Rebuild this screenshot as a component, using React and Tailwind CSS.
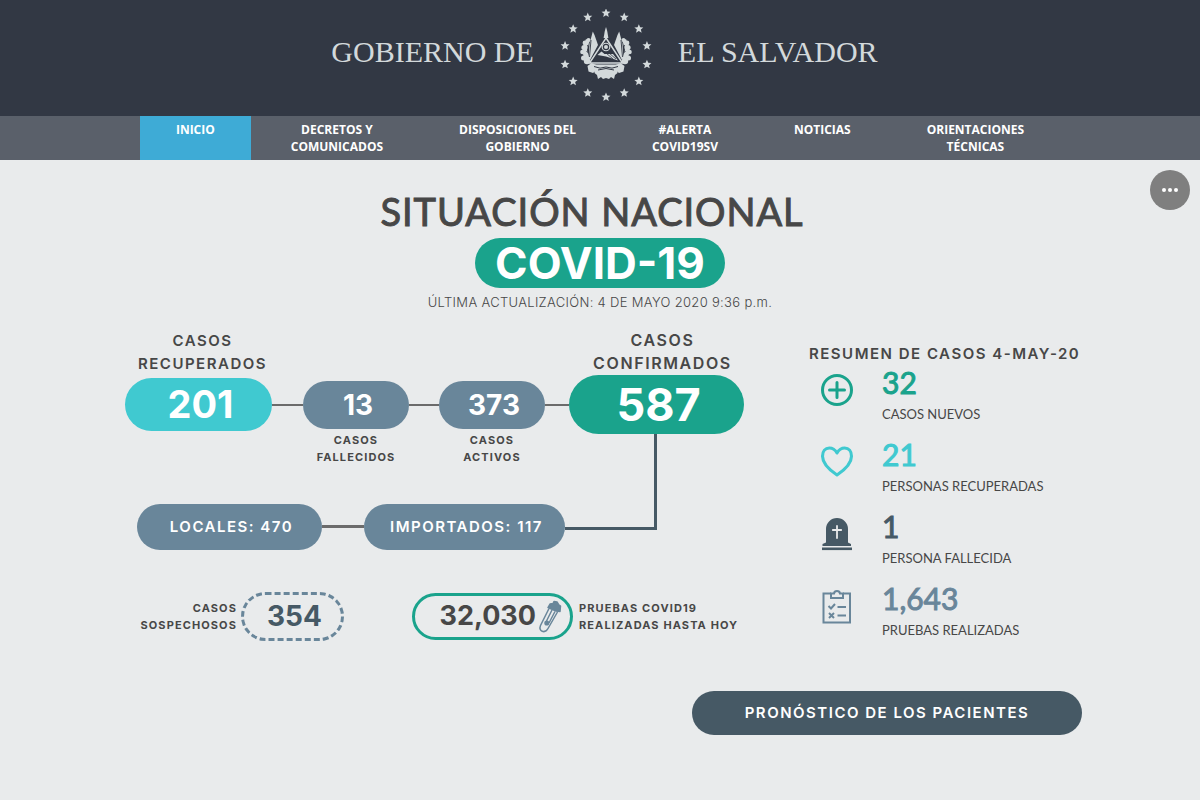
import React from "react";

const NAV = [
  { lines: ["INICIO"], active: true },
  { lines: ["DECRETOS Y", "COMUNICADOS"] },
  { lines: ["DISPOSICIONES DEL", "GOBIERNO"] },
  { lines: ["#ALERTA", "COVID19SV"] },
  { lines: ["NOTICIAS"] },
  { lines: ["ORIENTACIONES", "TÉCNICAS"] },
];

const STAR = "0,-4.6 1.3,-1.5 4.5,-1.3 2,0.8 2.8,4 0,2.3 -2.8,4 -2,0.8 -4.5,-1.3 -1.3,-1.5";

function Emblem() {
  const stars = Array.from({ length: 14 }, (_, i) => {
    const a = (i * 2 * Math.PI) / 14;
    return [46 + 42 * Math.sin(a), 46 - 42 * Math.cos(a)];
  });
  const side = (
    <g>
      <path d="M32 25.500l.8-3 1.700 3.500 3.500 10-8 15-1.500-2 1-14z" />
      <circle cx="28.500" cy="31" r="2" />
      <circle cx="25" cy="34" r="2.400" />
      <circle cx="24" cy="38.500" r="2.600" />
      <circle cx="22.500" cy="43" r="2.300" />
      <circle cx="25.500" cy="45.500" r="2.400" />
      <circle cx="23.500" cy="49" r="2.500" />
      <circle cx="27" cy="52" r="3.200" />
      <path d="M26 30q-4 8-1.500 17l3 6 2-3-2.500-9 2.500-9z" />
      <path d="M27.500 57l4-3 5 2 .5 5-4 3-4.500-1.500z" />
      <path d="M35 60l5-1 6 2v8l-3 1-2-2-3 2-1-4-2.500-2z" />
      <path d="M31 31l-1.500 17M27.500 36l1 3M26.500 42l2 2" stroke="#323844" strokeWidth=".9" fill="none" />
    </g>
  );
  return (
    <svg viewBox="0 0 92 92" className="h-[92px] w-[92px] fill-[#d3d9db]" role="img" aria-label="Escudo de El Salvador">
      {stars.map(([x, y], i) => (
        <polygon key={i} points={STAR} transform={`translate(${x} ${y})`} />
      ))}
      {side}
      <g transform="translate(92 0) scale(-1 1)">{side}</g>
      <path d="M46 18l1.200 4 1.200 7h-4.800l1.200-7z" />
      <path d="M46 29L62.500 54h-33z" fill="#323844" stroke="#d3d9db" strokeWidth="1.500" />
      <circle cx="46" cy="38" r="3.800" fill="none" stroke="#d3d9db" strokeWidth="1.100" />
      <circle cx="46" cy="38" r="2" />
      <path d="M37.500 46l4-3.500 3 2.500h8.500l5 6.500-12-4z" />
      <path d="M46 44l7 6M49 44l7 6" stroke="#323844" strokeWidth=".8" />
      <path d="M31 55.500h30l-5 6q-10 4-20 0z" />
      <path d="M34 57.500q6 3 12 .5 6 2.500 12-.5M38 61q8-3 16 0" stroke="#323844" strokeWidth="1" fill="none" />
    </svg>
  );
}

function PlusIcon() {
  return (
    <svg viewBox="0 0 34 34" className="h-[34px] w-[34px]" fill="none" stroke="#1aa38c" strokeWidth="3" strokeLinecap="round" aria-hidden="true">
      <circle cx="17" cy="17" r="14.500" />
      <path d="M17 9.500v15M9.500 17h15" />
    </svg>
  );
}

function HeartIcon() {
  return (
    <svg viewBox="0 0 34 34" className="h-[34px] w-[34px]" fill="none" stroke="#40c9d0" strokeWidth="3.200" strokeLinejoin="round" aria-hidden="true">
      <path d="M17.500 8.500C15.500 5.200 12.600 3.600 9.500 3.600 5.200 3.600 2.400 7.200 2.400 11.800c0 7.600 8 14.200 15.100 18.800 7.100-4.600 15.100-11.200 15.100-18.800 0-4.600-2.800-8.200-7.100-8.200-3.100 0-6 1.600-8 4.900z" transform="translate(.2 -.6) scale(.96 1)" />
    </svg>
  );
}

function TombIcon() {
  return (
    <svg viewBox="0 0 34 34" className="h-[34px] w-[34px]" fill="#465965" aria-hidden="true">
      <path d="M6 25.500V12a11 11 0 0 1 22 0v13.500l3 1.500v2H2.500v-2z" />
      <path d="M2 30.500h30v2.600H2z" />
      <path d="M17 9v12M12.800 13h8.400" stroke="#e9ebec" strokeWidth="1.800" fill="none" strokeLinecap="round" />
    </svg>
  );
}

function ClipboardIcon() {
  return (
    <svg viewBox="0 0 34 36" className="h-[36px] w-[34px]" fill="none" stroke="#69869a" strokeWidth="2" aria-hidden="true">
      <path d="M11 4.500H3.500v29h26.500v-29H23" />
      <path d="M11 4.500h3c.5-3.200 5.500-3.200 6 0h3v4.500H11z" />
      <path d="M8.500 17l2.500 2.500 4-4.500M17.500 18h8.500M17.500 26.500h8.500M9 24l5 5M14 24l-5 5" />
    </svg>
  );
}

function TubeIcon() {
  return (
    <svg viewBox="0 0 24 34" className="h-[34px] w-[24px] shrink-0" fill="none" stroke="#69869a" strokeWidth="1.500" strokeLinejoin="round" aria-hidden="true">
      <path d="M11 8.500L2.500 25.500C0 31.500 7 34 10 28.500L19.500 12" />
      <path d="M10 7.500l2-3.500 3-.5 1-2 3 .5 1.500 2.500 2 1.500-.5 5.500-4-.5z" fill="#69869a" />
      <path d="M14 10L8.500 21M17 11.500L11 23" />
      <circle cx="8.800" cy="23" r="1.800" fill="#69869a" />
    </svg>
  );
}

const SUMMARY = [
  { value: "32", label: "CASOS NUEVOS", color: "text-[#1aa38c]", Icon: PlusIcon },
  { value: "21", label: "PERSONAS RECUPERADAS", color: "text-[#40c9d0]", Icon: HeartIcon },
  { value: "1", label: "PERSONA FALLECIDA", color: "text-[#465965]", Icon: TombIcon },
  { value: "1,643", label: "PRUEBAS REALIZADAS", color: "text-[#69869a]", Icon: ClipboardIcon },
];

const SMALL = "text-[11px] leading-[17px] font-bold tracking-widest";

function Line() {
  return <div className="h-[2px] bg-[#6b6b6b]" />;
}

export default function App() {
  return (
    <div className="relative min-h-screen bg-[#e9ebec] font-['Inter',sans-serif] text-[#474747]">
      <header className="flex h-[116px] items-center justify-center gap-[26px] bg-[#323844] pb-[6px] pl-[9px] font-['Liberation_Serif',serif] text-[30px] leading-[36px] text-[#d3d9db]">
        <span className="pb-[6px]">GOBIERNO DE</span>
        <Emblem />
        <span className="pb-[6px]">EL SALVADOR</span>
      </header>

      <nav className="bg-[#5a606a] font-['Open_Sans',sans-serif] text-[12px] leading-[17px] font-bold text-white">
        <ul className="mx-auto flex h-[44px] w-fit gap-1">
          {NAV.map(({ lines, active }) => (
            <li key={lines[0]}>
              <a href="#" className={`block h-full px-9 pt-[5px] text-center whitespace-nowrap ${active ? "bg-[#3eabd6]" : ""}`}>
                {lines.map((l) => (
                  <span key={l} className="block">{l}</span>
                ))}
              </a>
            </li>
          ))}
        </ul>
      </nav>

      <button type="button" aria-label="Más opciones" className="absolute top-[170px] right-[10px] flex h-10 w-10 items-center justify-center gap-[2px] rounded-full bg-[#7f7f7f]">
        <span className="h-1 w-1 rounded-full bg-white" />
        <span className="h-1 w-1 rounded-full bg-white" />
        <span className="h-1 w-1 rounded-full bg-white" />
      </button>

      <main className="mx-auto max-w-[964px] pt-[28px]">
        <div className="flex flex-col items-center">
          <h1 className="flex flex-col items-center">
            <span className="pr-4 font-['Lato',sans-serif] text-[38px] leading-[46px] font-normal tracking-wide [-webkit-text-stroke:1px]">SITUACIÓN NACIONAL</span>
            <span className="mt-1 h-[50px] rounded-[25px] bg-[#1aa38c] px-5 text-[44px] leading-[50px] font-bold text-white">COVID-19</span>
          </h1>
          <p className="text-[13px] leading-[28px] font-light tracking-wide">ÚLTIMA ACTUALIZACIÓN: 4 DE MAYO 2020 9:36 p.m.</p>
        </div>

        <div className="flex justify-between pt-[13px]">
          <section className="pl-[7px]" aria-label="Casos a nivel nacional">
            <div className="grid grid-cols-[147px_31px_106px_30px_106px_24px_175px] items-center">
              <h2 className="pl-2 text-center text-[15px] leading-[23px] font-semibold tracking-widest whitespace-nowrap">CASOS<br />RECUPERADOS</h2>
              <h2 className="col-start-7 pl-3 text-center text-[16px] leading-[23px] font-semibold tracking-widest whitespace-nowrap">CASOS<br />CONFIRMADOS</h2>

              <div className="col-start-1 h-[53px] rounded-full bg-[#40c9d0] pl-1 text-center text-[38px] leading-[53px] font-bold text-white">201</div>
              <Line />
              <div className="h-[48px] rounded-full bg-[#69869a] pl-1 text-center text-[28px] leading-[48px] font-bold text-white">13</div>
              <Line />
              <div className="h-[48px] rounded-full bg-[#69869a] pl-1 text-center text-[28px] leading-[48px] font-bold text-white">373</div>
              <Line />
              <div className="h-[59px] rounded-full bg-[#1aa38c] pl-1 text-center text-[45px] leading-[59px] font-bold text-white">587</div>

              <p className={`col-start-3 -mt-[2px] text-center ${SMALL}`}>CASOS FALLECIDOS</p>
              <p className={`col-start-5 -mt-[2px] px-4 text-center ${SMALL}`}>CASOS ACTIVOS</p>
            </div>

            <div className="-mt-[32px] flex items-end pl-[12px] text-[15px] leading-[45px] font-semibold tracking-widest whitespace-nowrap text-white">
              <div className="h-[46px] w-[185px] rounded-full bg-[#69869a] pl-1 text-center">LOCALES: 470</div>
              <div className="mb-[22px] h-[3px] w-[42px] bg-[#6b6b6b]" />
              <div className="h-[46px] w-[201px] rounded-full bg-[#69869a] pl-1 text-center">IMPORTADOS: 117</div>
              <div className="mb-[20px] h-[96px] w-[92px] border-r-3 border-b-3 border-[#465965]" />
            </div>

            <div className="flex items-center pt-[42px]">
              <p className={`w-[116px] pr-1 text-right ${SMALL}`}>CASOS SOSPECHOSOS</p>
              <div className="h-[49px] w-[103px] rounded-full border-3 border-dashed border-[#69869a] pl-1 text-center text-[28px] leading-[43px] font-bold text-[#465965]">354</div>
              <div className="ml-[68px] flex h-[47px] w-[161px] items-center justify-end gap-[2px] rounded-full border-3 border-[#1aa38c] pr-[8px] text-[27px] font-bold">
                32,030
                <TubeIcon />
              </div>
              <p className={`pl-[6px] whitespace-nowrap ${SMALL}`}>PRUEBAS COVID19<br />REALIZADAS HASTA HOY</p>
            </div>
          </section>

          <section className="w-[273px] pt-[15px]">
            <h2 className="text-[15px] leading-[20px] font-semibold tracking-widest whitespace-nowrap">RESUMEN DE CASOS 4-MAY-20</h2>
            <ul className="font-['Lato',sans-serif]">
              {SUMMARY.map(({ value, label, color, Icon }) => (
                <li key={label} className="flex h-[72px] gap-[28px] pl-[11px]">
                  <span className="pt-[9px]"><Icon /></span>
                  <div>
                    <p className={`text-[30px] leading-[36px] [-webkit-text-stroke:1px] ${color}`}>{value}</p>
                    <p className="text-[13px] leading-[28px]">{label}</p>
                  </div>
                </li>
              ))}
            </ul>
          </section>
        </div>

        <div className="flex justify-end pt-[39px] pb-[65px]">
          <button type="button" className="h-[44px] w-[390px] rounded-full bg-[#465965] text-[15px] font-semibold tracking-widest text-white">PRONÓSTICO DE LOS PACIENTES</button>
        </div>
      </main>
    </div>
  );
}
